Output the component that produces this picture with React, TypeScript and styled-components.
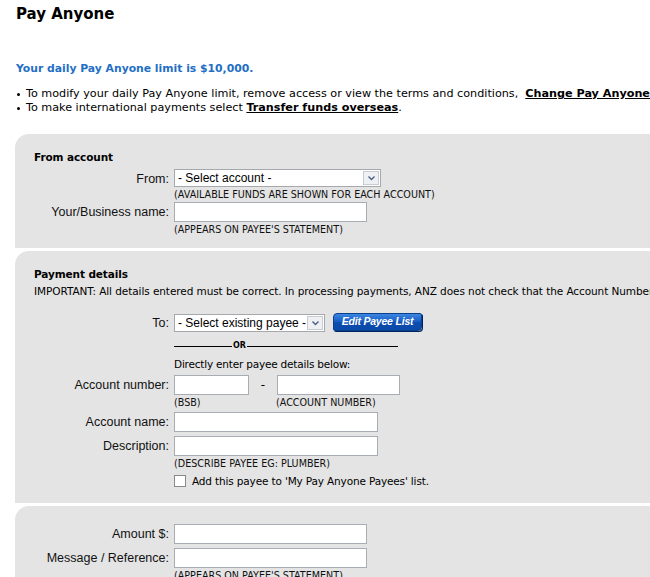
import styled, { createGlobalStyle } from "styled-components";

const GlobalStyle = createGlobalStyle`
  html, body {
    margin: 0;
    padding: 0;
    background: #ffffff;
    overflow: hidden;
  }
  body {
    font-family: "DejaVu Sans", Verdana, sans-serif;
    font-size: 11px;
    color: #000;
  }
`;

function Chevron() {
  return (
    <svg width="9" height="6" viewBox="0 0 9 6">
      <path d="M1.5 1.5 L4.5 4.5 L7.5 1.5" fill="none" stroke="#4d6185" strokeWidth="1.4" />
    </svg>
  );
}

function Select({ width, text }: { width: number; text: string }) {
  return (
    <SelectBox style={{ width }}>
      <SelectText>{text}</SelectText>
      <ArrowBox>
        <Chevron />
      </ArrowBox>
    </SelectBox>
  );
}

export default function App() {
  return (
    <Page>
      <GlobalStyle />
      <Title>Pay Anyone</Title>
      <Limit>Your daily Pay Anyone limit is $10,000.</Limit>
      <Bullets>
        <li>
          To modify your daily Pay Anyone limit, remove access or view the terms and conditions,&nbsp;{" "}
          <StrongLink>Change Pay Anyone limit</StrongLink>
        </li>
        <li>
          To make international payments select <StrongLink>Transfer funds overseas</StrongLink>.
        </li>
      </Bullets>

      <Panel $top={19}>
        <Heading>From account</Heading>
        <Form $top={5} $gap={2}>
          <Label>From:</Label>
          <Field>
            <Select width={207} text="- Select account -" />
            <Hint>(AVAILABLE FUNDS ARE SHOWN FOR EACH ACCOUNT)</Hint>
          </Field>
          <Label>Your/Business name:</Label>
          <Field>
            <Input $width={193} />
            <Hint>(APPEARS ON PAYEE'S STATEMENT)</Hint>
          </Field>
        </Form>
      </Panel>

      <Panel $top={3} $bottom={15}>
        <Heading>Payment details</Heading>
        <Note>
          IMPORTANT: All details entered must be correct. In processing payments, ANZ does not check that the Account Number
          matches the Account Name.
        </Note>
        <Form $top={15}>
          <Label>To:</Label>
          <Field>
            <InlineRow>
              <Select width={151} text="- Select existing payee -" />
              <EditButton type="button">Edit Payee List</EditButton>
            </InlineRow>
            <OrDivider>
              <OrLine $width={58} />
              <OrText>OR</OrText>
              <OrLine $width={151} />
            </OrDivider>
            <Direct>Directly enter payee details below:</Direct>
          </Field>
          <Label>Account number:</Label>
          <Field>
            <InlineRow $gap={0}>
              <Input $width={75} />
              <Dash>-</Dash>
              <Input $width={123} />
            </InlineRow>
            <InlineRow $gap={0}>
              <Hint style={{ width: 102 }}>(BSB)</Hint>
              <Hint>(ACCOUNT NUMBER)</Hint>
            </InlineRow>
          </Field>
          <Label>Account name:</Label>
          <Field>
            <Input $width={204} />
          </Field>
          <Label>Description:</Label>
          <Field>
            <Input $width={204} />
            <Hint>(DESCRIBE PAYEE EG: PLUMBER)</Hint>
            <CheckRow>
              <CheckBox />
              <span>Add this payee to 'My Pay Anyone Payees' list.</span>
            </CheckRow>
          </Field>
        </Form>
      </Panel>

      <Panel $top={3}>
        <Form $top={2}>
          <Label>Amount $:</Label>
          <Field>
            <Input $width={193} />
          </Field>
          <Label>Message / Reference:</Label>
          <Field>
            <Input $width={193} />
            <Hint>(APPEARS ON PAYEE'S STATEMENT)</Hint>
          </Field>
        </Form>
      </Panel>
    </Page>
  );
}

const Page = styled.div`
  width: 820px;
  padding: 0 0 40px 15px;
`;

const Title = styled.h1`
  margin: 0;
  padding: 4px 0 0 1px;
  font-size: 15px;
  line-height: 20px;
  font-weight: bold;
  color: #000;
`;

const Limit = styled.p`
  margin: 38px 0 0 1px;
  font-size: 10.8px;
  line-height: 14px;
  font-weight: bold;
  color: #1f6fc5;
`;

const Bullets = styled.ul`
  margin: 11px 0 0 0;
  padding: 0 0 0 11px;
  list-style: none;
  white-space: nowrap;
  font-size: 11.2px;

  li {
    position: relative;
    line-height: 14px;
  }

  li::before {
    content: "";
    position: absolute;
    left: -9px;
    top: 6px;
    width: 3px;
    height: 3px;
    border-radius: 50%;
    background: #000;
  }
`;

const StrongLink = styled.a`
  font-weight: bold;
  color: #000;
  text-decoration: underline;
  cursor: pointer;
`;

const Panel = styled.section<{ $top: number; $bottom?: number }>`
  margin-top: ${(p) => p.$top}px;
  background: #e4e4e4;
  border-top-left-radius: 14px;
  padding: 16px 0 ${(p) => p.$bottom ?? 13}px 0;
`;

const Heading = styled.h2`
  margin: 0 0 0 19px;
  font-size: 10.5px;
  letter-spacing: -0.1px;
  line-height: 14px;
  font-weight: bold;
`;

const Note = styled.p`
  margin: 3px 0 0 19px;
  font-size: 10.5px;
  letter-spacing: -0.08px;
  line-height: 14px;
  white-space: nowrap;
`;

const Form = styled.div<{ $top?: number; $gap?: number }>`
  display: grid;
  grid-template-columns: 154px auto;
  column-gap: 5px;
  row-gap: ${(p) => p.$gap ?? 4}px;
  margin-top: ${(p) => p.$top ?? 6}px;
  align-items: start;
`;

const Label = styled.label`
  font-family: "Liberation Sans", Arial, sans-serif;
  font-size: 12.5px;
  line-height: 20px;
  text-align: right;
  color: #111;
`;

const Field = styled.div`
  display: flex;
  flex-direction: column;
  align-items: flex-start;
`;

const Input = styled.input<{ $width: number }>`
  box-sizing: border-box;
  width: ${(p) => p.$width}px;
  height: 20px;
  margin: 0;
  padding: 0 2px;
  border: 1px solid #a8acb3;
  background: #fff;
  font-family: "Liberation Sans", Arial, sans-serif;
  font-size: 12px;
`;

const SelectBox = styled.div`
  box-sizing: border-box;
  display: flex;
  align-items: stretch;
  height: 18px;
  border: 1px solid #a5a9ae;
  background: #fff;
`;

const SelectText = styled.span`
  flex: 1;
  padding-left: 3px;
  font-family: "Liberation Sans", Arial, sans-serif;
  font-size: 12px;
  line-height: 16px;
  color: #000;
  white-space: nowrap;
  overflow: hidden;
`;

const ArrowBox = styled.span`
  box-sizing: border-box;
  width: 16px;
  margin: 1px;
  display: flex;
  align-items: center;
  justify-content: center;
  border: 1px solid #c8ccd2;
  background: #eef0f3;
`;

const Hint = styled.span`
  font-size: 9.6px;
  line-height: 11px;
  margin-top: 2px;
  color: #111;
  white-space: nowrap;
`;

const InlineRow = styled.div<{ $gap?: number }>`
  display: flex;
  align-items: center;
  gap: ${(p) => p.$gap ?? 8}px;
`;

const EditButton = styled.button`
  box-sizing: border-box;
  width: 89px;
  height: 18px;
  margin: 0 0 1px 0;
  padding: 0 0 1px 0;
  border: 1px solid #0a3f8c;
  border-radius: 4px 2px 4px 2px;
  background: linear-gradient(#3d86e0 0%, #1860c8 45%, #0d4cad 55%, #0a4aa8 100%);
  box-shadow: 1px 1px 0 #00245c;
  color: #fff;
  font-family: "Liberation Sans", Arial, sans-serif;
  font-size: 10.5px;
  font-weight: bold;
  font-style: italic;
  letter-spacing: -0.2px;
  line-height: 15px;
  white-space: nowrap;
  cursor: pointer;
`;

const OrDivider = styled.div`
  display: flex;
  align-items: center;
  margin: 9px 0 0 0;
  height: 10px;
`;

const OrLine = styled.span<{ $width: number }>`
  display: block;
  width: ${(p) => p.$width}px;
  height: 1px;
  background: #000;
`;

const OrText = styled.span`
  font-size: 8px;
  font-weight: bold;
  line-height: 10px;
  padding: 0 1px;
`;

const Direct = styled.span`
  margin-top: 6px;
  font-size: 10.5px;
  letter-spacing: -0.2px;
  line-height: 14px;
`;

const Dash = styled.span`
  width: 28px;
  text-align: center;
  font-size: 12px;
`;

const CheckRow = styled.label`
  display: flex;
  align-items: center;
  gap: 6px;
  margin-top: 5px;
  font-size: 10.5px;
  letter-spacing: -0.15px;
  line-height: 14px;
`;

const CheckBox = styled.span`
  box-sizing: border-box;
  width: 12px;
  height: 12px;
  border: 1px solid #8a8a8a;
  background: #fff;
`;
